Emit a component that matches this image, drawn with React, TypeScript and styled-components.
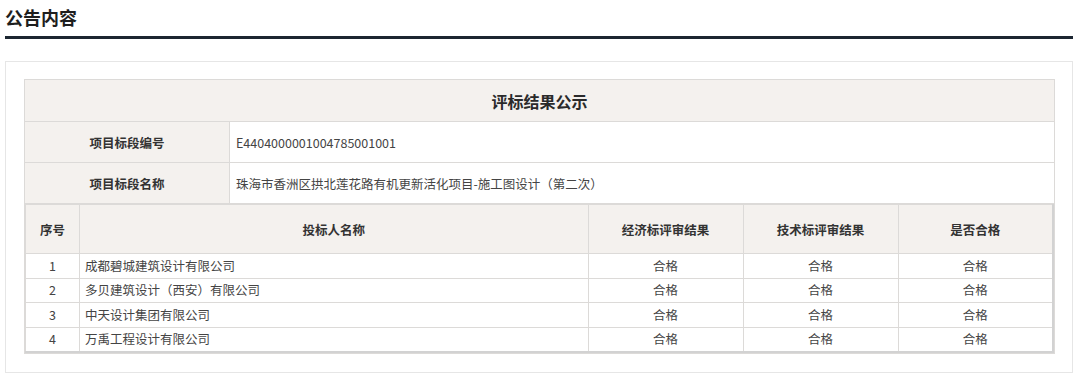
import React from "react";
import styled, { createGlobalStyle } from "styled-components";

const GlobalStyle = createGlobalStyle`
  body {
    margin: 0;
    background: #ffffff;
    font-family: "Noto Sans CJK SC", "Noto Sans", sans-serif;
    color: #333;
  }
`;

const Page = styled.div`
  padding: 0 7px 0 5px;
`;

const TitleBar = styled.div`
  height: 36px;
  border-bottom: 3px solid #1c2631;
  display: flex;
  align-items: center;
`;

const Title = styled.h2`
  margin: 0;
  font-size: 18px;
  font-weight: 700;
  color: #1e1e1e;
  line-height: 20px;
  padding-bottom: 2px;
`;

const Panel = styled.div`
  margin-top: 22px;
  border: 1px solid #e6e6e6;
  padding: 17px 17px 18px 18px;
`;

const Table = styled.table`
  width: 100%;
  border-collapse: collapse;
  table-layout: fixed;
  border: 1px solid #dcdad8;
`;

const Col = styled.col<{ $w?: number }>`
  width: ${({ $w }) => ($w ? `${$w}px` : "auto")};
`;

const Caption = styled.td`
  height: 41px;
  background: #f4f1ee;
  border: 1px solid #dcdad8;
  text-align: center;
  font-size: 16px;
  font-weight: 700;
  color: #2a2a2a;
  padding: 0;
`;

const Label = styled.td`
  height: 40px;
  background: #f4f1ee;
  border: 1px solid #dcdad8;
  text-align: center;
  font-size: 12.5px;
  font-weight: 700;
  color: #333;
  padding: 0;
`;

const Value = styled.td`
  border: 1px solid #dcdad8;
  font-size: 12.5px;
  color: #444;
  padding: 0 6px;
`;

const Holder = styled.td`
  padding: 0;
  border: 1px solid #dcdad8;
`;

const SubTable = styled.table`
  width: 100%;
  border-collapse: collapse;
  table-layout: fixed;
  border-style: solid;
  border-color: #d2d2d2;
  border-width: 1px 2px 2px 1px;
`;

const HeadCell = styled.th`
  height: 48px;
  background: #f4f1ee;
  border: 1px solid #dcdad8;
  font-size: 12.5px;
  font-weight: 700;
  color: #333;
  text-align: center;
  padding: 0;
`;

const DataCell = styled.td<{ $left?: boolean }>`
  height: 23.5px;
  line-height: 18px;
  border: 1px solid #dcdad8;
  font-size: 12.5px;
  color: #444;
  text-align: ${({ $left }) => ($left ? "left" : "center")};
  padding: ${({ $left }) => ($left ? "0 5px" : "0")};
  white-space: nowrap;
`;

const bidders = [
  "成都碧城建筑设计有限公司",
  "多贝建筑设计（西安）有限公司",
  "中天设计集团有限公司",
  "万禹工程设计有限公司",
];

const App = () => {
  return (
    <Page>
      <GlobalStyle />
      <TitleBar>
        <Title>公告内容</Title>
      </TitleBar>
      <Panel>
        <Table>
          <colgroup>
            <Col $w={205} />
            <Col />
          </colgroup>
          <tbody>
            <tr>
              <Caption colSpan={2}>评标结果公示</Caption>
            </tr>
            <tr>
              <Label>项目标段编号</Label>
              <Value>E4404000001004785001001</Value>
            </tr>
            <tr>
              <Label>项目标段名称</Label>
              <Value>珠海市香洲区拱北莲花路有机更新活化项目-施工图设计（第二次）</Value>
            </tr>
            <tr>
              <Holder colSpan={2}>
                <SubTable>
                  <colgroup>
                    <Col $w={54} />
                    <Col />
                    <Col $w={155} />
                    <Col $w={155} />
                    <Col $w={155} />
                  </colgroup>
                  <thead>
                    <tr>
                      <HeadCell>序号</HeadCell>
                      <HeadCell>投标人名称</HeadCell>
                      <HeadCell>经济标评审结果</HeadCell>
                      <HeadCell>技术标评审结果</HeadCell>
                      <HeadCell>是否合格</HeadCell>
                    </tr>
                  </thead>
                  <tbody>
                    {bidders.map((name, i) => (
                      <tr key={name}>
                        <DataCell>{i + 1}</DataCell>
                        <DataCell $left>{name}</DataCell>
                        <DataCell>合格</DataCell>
                        <DataCell>合格</DataCell>
                        <DataCell>合格</DataCell>
                      </tr>
                    ))}
                  </tbody>
                </SubTable>
              </Holder>
            </tr>
          </tbody>
        </Table>
      </Panel>
    </Page>
  );
};

export default App;
